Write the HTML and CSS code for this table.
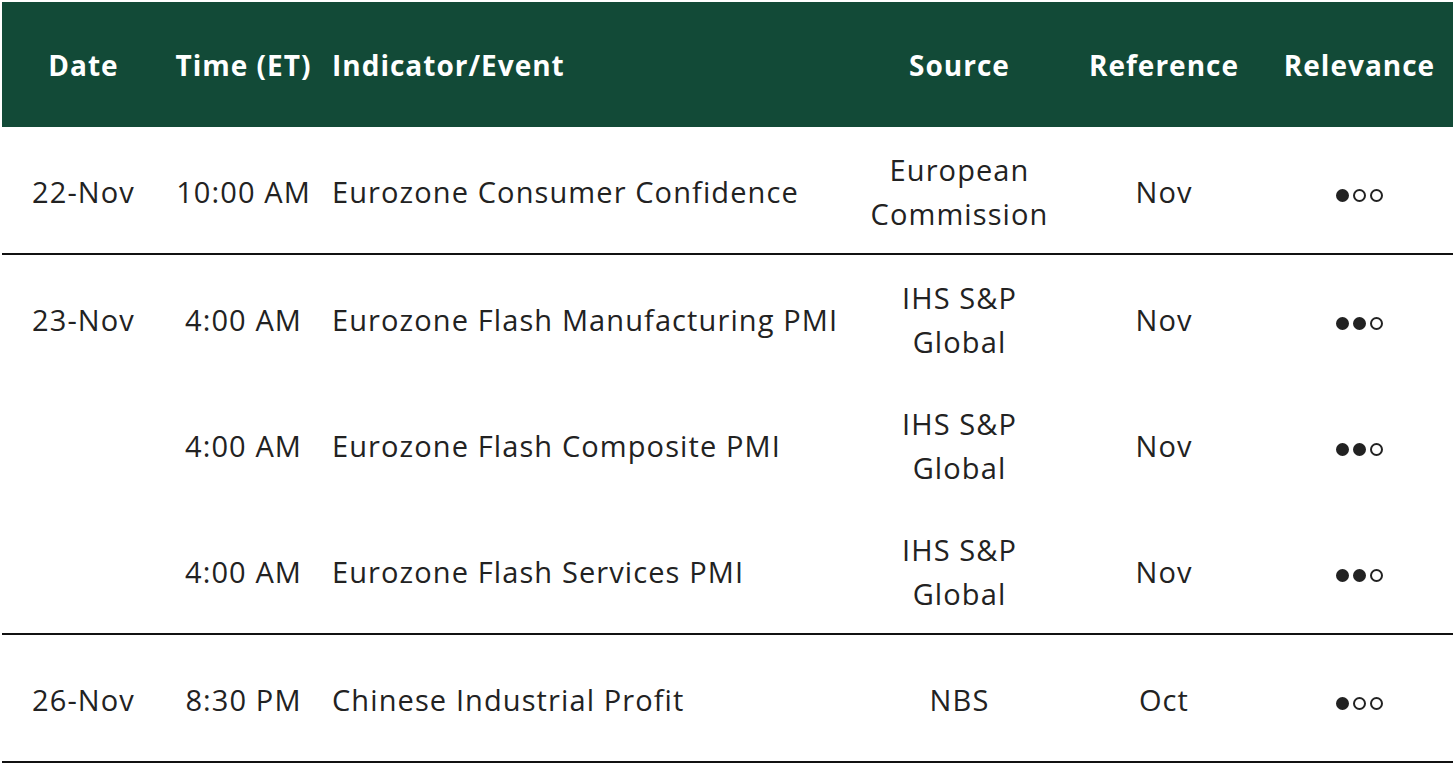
FILE: index.html
```html
<!DOCTYPE html>
<html>
<head>
<meta charset="utf-8">
<link rel="stylesheet" href="styles.css">
</head>
<body>
<table class="cal">
  <colgroup>
    <col class="c-date"><col class="c-time"><col class="c-ind"><col class="c-src"><col class="c-ref"><col class="c-rel">
  </colgroup>
  <thead>
    <tr>
      <th>Date</th><th>Time (ET)</th><th class="left">Indicator/Event</th><th>Source</th><th>Reference</th><th>Relevance</th>
    </tr>
  </thead>
  <tbody>
    <tr>
      <td>22-Nov</td><td>10:00 AM</td><td class="left">Eurozone Consumer Confidence</td><td>European<br>Commission</td><td>Nov</td>
      <td><span class="dots"><i class="on"></i><i></i><i></i></span></td>
    </tr>
  </tbody>
  <tbody>
    <tr>
      <td>23-Nov</td><td>4:00 AM</td><td class="left">Eurozone Flash Manufacturing PMI</td><td>IHS S&amp;P<br>Global</td><td>Nov</td>
      <td><span class="dots"><i class="on"></i><i class="on"></i><i></i></span></td>
    </tr>
    <tr>
      <td></td><td>4:00 AM</td><td class="left">Eurozone Flash Composite PMI</td><td>IHS S&amp;P<br>Global</td><td>Nov</td>
      <td><span class="dots"><i class="on"></i><i class="on"></i><i></i></span></td>
    </tr>
    <tr>
      <td></td><td>4:00 AM</td><td class="left">Eurozone Flash Services PMI</td><td>IHS S&amp;P<br>Global</td><td>Nov</td>
      <td><span class="dots"><i class="on"></i><i class="on"></i><i></i></span></td>
    </tr>
  </tbody>
  <tbody>
    <tr>
      <td>26-Nov</td><td>8:30 PM</td><td class="left">Chinese Industrial Profit</td><td>NBS</td><td>Oct</td>
      <td><span class="dots"><i class="on"></i><i></i><i></i></span></td>
    </tr>
  </tbody>
</table>
</body>
</html>
```

FILE: styles.css
```css
html, body {
  margin: 0;
  padding: 0;
  background: #ffffff;
}
body {
  padding: 2px 2px 0 2px;
  font-family: "Open Sans", "Lato", sans-serif;
  color: #222222;
}
.cal {
  width: 1451px;
  border-collapse: collapse;
  table-layout: fixed;
  font-size: 29px;
  letter-spacing: 1.1px;
}
.c-date { width: 163px; }
.c-time { width: 157px; }
.c-ind { width: 535px; }
.c-src { width: 205px; }
.c-ref { width: 204px; }
.c-rel { width: 187px; }
.cal th {
  background: #124a37;
  color: #ffffff;
  font-size: 28px;
  font-weight: 700;
  letter-spacing: 1px;
  height: 125px;
  padding: 0;
  text-align: center;
  vertical-align: middle;
  white-space: nowrap;
}
.cal td {
  height: 122px;
  padding: 4px 0 0 0;
  text-align: center;
  vertical-align: middle;
  line-height: 44px;
  white-space: nowrap;
}
.cal .left {
  text-align: left;
  padding-left: 10px;
}
.cal tbody {
  border-bottom: 2px solid #111111;
}
.dots {
  display: inline-flex;
  gap: 4px;
  vertical-align: middle;
}
.dots i {
  display: block;
  width: 13px;
  height: 13px;
  box-sizing: border-box;
  border-radius: 50%;
  border: 2.5px solid #222222;
}
.dots i.on {
  background: #222222;
}
```
